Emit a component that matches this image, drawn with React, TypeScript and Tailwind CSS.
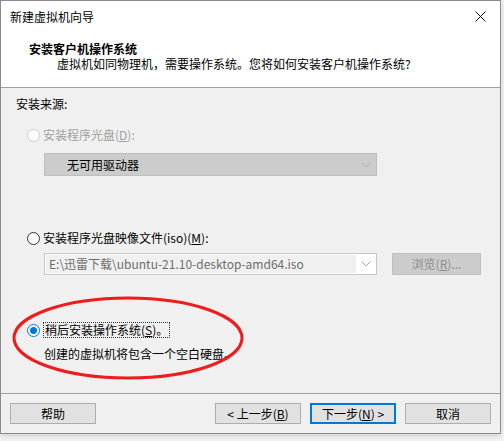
import React from "react";

const font = { fontFamily: '"Noto Sans CJK SC", "Noto Sans", sans-serif' };

function Chevron({ color = "#a8a8a8" }: { color?: string }) {
  return (
    <svg width="10" height="6" viewBox="0 0 10 6">
      <path d="M0.5 0.5 L5 5 L9.5 0.5" fill="none" stroke={color} strokeWidth="1" />
    </svg>
  );
}

function Radio({ state }: { state: "disabled" | "off" | "on" }) {
  if (state === "on") {
    return (
      <span className="w-[13px] h-[13px] rounded-full border border-[#0078d7] bg-white flex items-center justify-center">
        <span className="w-[7px] h-[7px] rounded-full bg-[#0078d7]" />
      </span>
    );
  }
  return (
    <span
      className={
        state === "disabled"
          ? "w-[13px] h-[13px] rounded-full border border-[#cccccc] bg-white"
          : "w-[13px] h-[13px] rounded-full border border-[#333333] bg-white"
      }
    />
  );
}

function Btn({ children, primary }: { children: React.ReactNode; primary?: boolean }) {
  return (
    <div
      className={
        primary
          ? "w-[86px] h-[21px] bg-[#e1e1e1] border-2 border-[#0078d7] flex items-center justify-center text-[12px] text-black"
          : "w-[86px] h-[21px] bg-[#e1e1e1] border border-[#adadad] flex items-center justify-center text-[12px] text-black"
      }
    >
      {children}
    </div>
  );
}

export default function App() {
  return (
    <div className="w-[504px] h-[441px] bg-[#f4f4f4] overflow-hidden" style={font}>
      <div className="w-[501px] h-[434px] border border-[#8a8a8a] flex flex-col bg-[#f0f0f0] shadow-[0_2px_6px_rgba(0,0,0,0.15)] text-[12px] leading-[16px] text-black">
        {/* Title bar */}
        <div className="h-[31px] bg-white flex items-center justify-between pl-[9px] pr-[14px]">
          <span>新建虚拟机向导</span>
          <svg width="11" height="11" viewBox="0 0 11 11">
            <path d="M0.5 0.5 L10.5 10.5 M10.5 0.5 L0.5 10.5" stroke="#111" strokeWidth="1" />
          </svg>
        </div>

        {/* Header */}
        <div className="h-[56px] bg-white border-b border-[#a0a0a0] pt-[9px] pl-[28px]">
          <div className="font-bold">安装客户机操作系统</div>
          <div className="pl-[28px] mt-[-1px]">
            虚拟机如同物理机，需要操作系统。您将如何安装客户机操作系统?
          </div>
        </div>

        {/* Body */}
        <div className="relative flex-1 flex flex-col pl-[15px] pt-[8px]">
          <div>安装来源:</div>

          <div className="flex items-center gap-[3px] mt-[15px] pl-[11px] text-[#a0a0a0]">
            <Radio state="disabled" />
            <span>
              安装程序光盘(<span className="underline">D</span>):
            </span>
          </div>
          <div className="ml-[28px] mt-[10px] w-[333px] h-[23px] bg-[#cccccc] border border-[#bfbfbf] flex items-center justify-between pl-[22px] pr-[5px]">
            <span>无可用驱动器</span>
            <Chevron color="#b0b0b0" />
          </div>

          <div className="flex items-center gap-[3px] mt-[54px] pl-[11px]">
            <Radio state="off" />
            <span>
              安装程序光盘映像文件(iso)(<span className="underline">M</span>):
            </span>
          </div>
          <div className="flex items-center mt-[7px]">
            <div className="ml-[28px] w-[333px] h-[22px] bg-white border border-[#c4c4c4] flex items-center p-[1px]">
              <div className="flex-1 h-full bg-[#f0f0f0] flex items-center pl-[3px] text-[#6d6d6d]">
                E:\迅雷下载\ubuntu-21.10-desktop-amd64.iso
              </div>
              <div className="w-[19px] flex items-center justify-center">
                <Chevron color="#a8a8a8" />
              </div>
            </div>
            <div className="ml-[15px] w-[89px] h-[22px] bg-[#cccccc] border border-[#bfbfbf] flex items-center justify-center text-[#8c8c8c]">
              浏览(<span className="underline">R</span>)...
            </div>
          </div>

          <div className="flex items-center gap-[3px] mt-[47px] pl-[11px]">
            <Radio state="on" />
            <span className="border border-dotted border-[#333] px-[1px] leading-[14px]">
              稍后安装操作系统(<span className="underline">S</span>)。
            </span>
          </div>
          <div className="pl-[28px] mt-[8px]">创建的虚拟机将包含一个空白硬盘。</div>

          <svg
            className="absolute left-0 top-0 pointer-events-none"
            width="500"
            height="305"
            viewBox="0 0 500 305"
          >
            <ellipse cx="127" cy="250" rx="114" ry="40" fill="none" stroke="#ee1c1c" strokeWidth="3" />
          </svg>
        </div>

        {/* Footer */}
        <div className="h-[40px] border-t border-[#a0a0a0] flex items-start pt-[9px] pl-[9px]">
          <Btn>帮助</Btn>
          <div className="ml-[119px]">
            <Btn>
              &lt; 上一步(<span className="underline">B</span>)
            </Btn>
          </div>
          <div className="ml-[9px]">
            <Btn primary>
              下一步(<span className="underline">N</span>) &gt;
            </Btn>
          </div>
          <div className="ml-[9px]">
            <Btn>取消</Btn>
          </div>
        </div>
      </div>
    </div>
  );
}
